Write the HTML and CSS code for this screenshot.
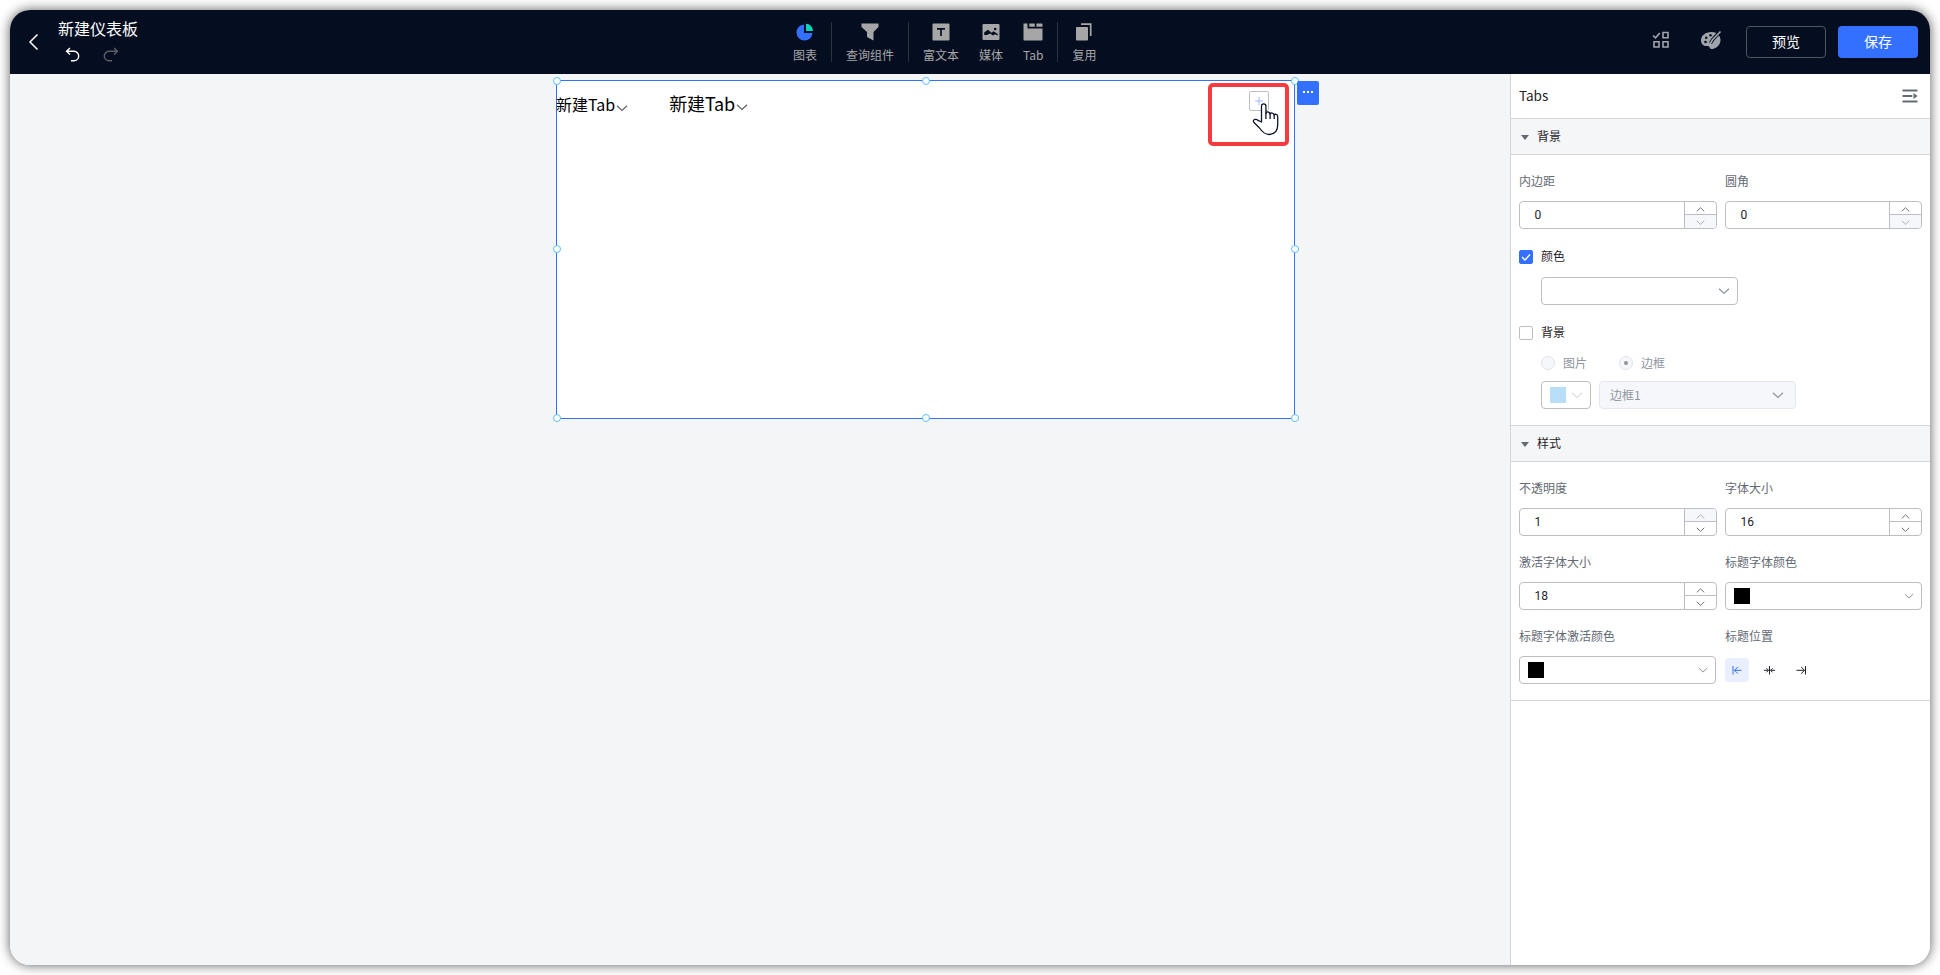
FILE: index.html
```html
<!DOCTYPE html>
<html lang="zh-CN">
<head>
<meta charset="utf-8">
<title>新建仪表板</title>
<link rel="stylesheet" href="styles.css">
</head>
<body>
<svg class="defs">
  <symbol id="chev-down" viewBox="0 0 12 12"><path d="M1 3.700 6 8.500 11 3.700" fill="none" stroke="currentColor" stroke-width="1.200"/></symbol>
  <symbol id="chev-up" viewBox="0 0 12 12"><path d="M1 8.500 6 3.700 11 8.500" fill="none" stroke="currentColor" stroke-width="1.200"/></symbol>
</svg>
<div class="window">
  <header class="header">
    <div class="left">
      <svg class="back" width="12" height="18" viewBox="0 0 12 18"><path d="M9.500 1.500 2 9l7.500 7.500" fill="none" stroke="#fff" stroke-width="1.500"/></svg>
      <div class="name">
        <div class="name-text">新建仪表板</div>
        <div class="history">
          <svg width="16" height="16" viewBox="0 0 16 16" fill="none" stroke="#fff" stroke-width="1.400"><path d="M5 1 1.500 4.300 5 7.600M1.500 4.300H9a4.700 4.700 0 0 1 0 9.400H6"/></svg>
          <svg width="16" height="16" viewBox="0 0 16 16" fill="none" stroke="#5b5d62" stroke-width="1.400"><path d="m11 1 3.500 3.300L11 7.600M14.500 4.300H6a4.700 4.700 0 0 0 0 9.400h3"/></svg>
        </div>
      </div>
    </div>
    <nav class="tools">
      <div class="group">
        <div class="tool"><svg width="18" height="18" viewBox="0 0 18 18"><path d="M8 1.500V10h8.500A8 8 0 1 1 8 1.500Z" fill="#3370ff"/><path d="M10 .8A7 7 0 0 1 17 8h-7Z" fill="#00d6b9"/></svg><span>图表</span></div>
      </div>
      <div class="group">
        <div class="tool"><svg width="18" height="18" viewBox="0 0 18 18"><path d="M.5.500h17V4l-5 5v8.500L6 14V9L.5 4Z" fill="#a6a6a6"/></svg><span>查询组件</span></div>
      </div>
      <div class="group">
        <div class="tool"><svg width="18" height="18" viewBox="0 0 18 18"><rect x=".5" y=".5" width="17" height="17" rx="1" fill="#a6a6a6"/><path d="M5 5.800h8M9 5.800V13" stroke="#050e21" stroke-width="1.700"/></svg><span>富文本</span></div>
        <div class="tool"><svg width="18" height="18" viewBox="0 0 18 18"><rect x=".5" y="1" width="17" height="16" rx="1" fill="#a6a6a6"/><path d="M2.200 12V9.500L6 6.800l3.500 3 2-1.500L15.800 11v1.500L13 11.200l-2 1.300-3-2-3 1.500Z" fill="#050e21"/><circle cx="13.200" cy="6" r="1.300" fill="#050e21"/></svg><span>媒体</span></div>
        <div class="tool"><svg class="wide" width="20" height="18" viewBox="0 0 20 18"><path d="M.5.500h4v5h15v11.300q0 .7-.7.700H1.200q-.7 0-.7-.7ZM6.300.5h5.500v3.300H6.300ZM13.400.5h5.300q.8 0 .8.8v2.500h-6.100Z" fill="#a6a6a6"/></svg><span>Tab</span></div>
      </div>
      <div class="group">
        <div class="tool"><svg width="18" height="18" viewBox="0 0 18 18"><rect x="1" y="4" width="12" height="13.500" rx=".8" fill="#a6a6a6"/><path d="M6 1.200h9.700V13" fill="none" stroke="#a6a6a6" stroke-width="1.700"/></svg><span>复用</span></div>
      </div>
    </nav>
    <div class="actions">
      <svg class="batch" width="18" height="18" viewBox="0 0 18 18" fill="none" stroke="#a0a4ab" stroke-width="1.600"><path d="m1 4.500 2.500 2.300L7.800 2"/><path d="M11 1.500h5v5.300h-5ZM2 10.700h5V16H2ZM11 10.700h5V16h-5Z"/></svg>
      <svg class="palette" width="22" height="20" viewBox="0 0 22 20"><path d="M11.500 2C5.500 2 1 5.500 1 10.500 1 14 3.500 16 6.500 16c2 0 2.700.3 3.200 1.700.5 1.200 2 1.600 3.800 1 4-1.200 7-4.700 7-8.700 0-4.500-4-8-9-8Z" fill="#a0a4ab"/><g fill="#050e21"><circle cx="5.500" cy="12" r="1.300"/><circle cx="6.200" cy="7.700" r="1.200"/><circle cx="10.500" cy="5.200" r="1.200"/></g><path d="m10.500 13.200 2-3.400L20.500 1" fill="none" stroke="#050e21" stroke-width="3.400"/><path d="m10.300 13.700 2-3.700 8.200-8.500" fill="none" stroke="#a0a4ab" stroke-width="1.700"/></svg>
      <button class="btn outline">预览</button>
      <button class="btn primary">保存</button>
    </div>
  </header>
  <main class="main">
    <section class="canvas">
      <div class="widget">
        <div class="tabs">
          <div class="tab">新建Tab<svg width="12" height="12"><use href="#chev-down"/></svg></div>
          <div class="tab active">新建Tab<svg width="12" height="12"><use href="#chev-down"/></svg></div>
        </div>
        <i class="dot nw"></i><i class="dot n"></i><i class="dot ne"></i><i class="dot w"></i><i class="dot e"></i><i class="dot sw"></i><i class="dot s"></i><i class="dot se"></i>
        <div class="more"><i></i><i></i><i></i></div>
        <div class="add"><svg width="10" height="10" viewBox="0 0 10 10"><path d="M5 1v8M1 5h8" stroke="#9db8fb"/></svg></div>
        <div class="mark"></div>
        <svg class="hand" width="28" height="34" viewBox="0 0 28 34"><path d="M9.500 20V4a2.200 2.200 0 0 1 4.400 0v7.500q0-1.800 2.200-1.500 2 .3 2 2.200 0-1.500 2.200-1.100 1.900.4 1.900 2.100.2-1.300 2-.8 1.500.5 1.500 2.300V23q0 9-8.700 9.500Q12 32.500 7.500 26L2 20.500q-1.500-2.300.5-3 2-.5 4 1.200Z" fill="#fff" stroke="#12162a" stroke-width="1.300" stroke-linejoin="round"/><path d="M13.900 10.500V17M18.100 11v6M22.200 12v5" stroke="#12162a" stroke-width="1.300"/></svg>
      </div>
    </section>
    <aside class="panel">
      <div class="panel-title"><span>Tabs</span>
        <svg width="16" height="14" viewBox="0 0 16 14" fill="#646a73"><path d="M.5.500h15v2H.5ZM.5 6h9.800v2H.5ZM.5 11.500h15v2H.5ZM11.500 4 15.500 7l-4 3Z"/></svg>
      </div>
      <div class="section-head"><i></i><span>背景</span></div>
      <div class="section first">
        <div class="grid">
          <div class="field"><label>内边距</label><div class="num"><b>0</b><div class="steps"><span><svg><use href="#chev-up"/></svg></span><span class="off"><svg><use href="#chev-down"/></svg></span></div></div></div>
          <div class="field"><label>圆角</label><div class="num"><b>0</b><div class="steps"><span><svg><use href="#chev-up"/></svg></span><span class="off"><svg><use href="#chev-down"/></svg></span></div></div></div>
        </div>
        <div class="check"><i class="box on"><svg width="12" height="12" viewBox="0 0 12 12"><path d="m2 6 3 3 5-5.500" fill="none" stroke="#fff" stroke-width="1.300"/></svg></i><span>颜色</span></div>
        <div class="select color-select"><svg class="big"><use href="#chev-down"/></svg></div>
        <div class="check second"><i class="box"></i><span>背景</span></div>
        <div class="radios"><span class="radio"><i></i>图片</span><span class="radio"><i class="sel"></i>边框</span></div>
        <div class="frame-row">
          <div class="select mini"><i class="swatch blue"></i><svg class="big"><use href="#chev-down"/></svg></div>
          <div class="select disabled">边框1<svg class="big"><use href="#chev-down"/></svg></div>
        </div>
      </div>
      <div class="section-head"><i></i><span>样式</span></div>
      <div class="section style">
        <div class="grid">
          <div class="field"><label>不透明度</label><div class="num"><b>1</b><div class="steps"><span class="off"><svg><use href="#chev-up"/></svg></span><span><svg><use href="#chev-down"/></svg></span></div></div></div>
          <div class="field"><label>字体大小</label><div class="num"><b>16</b><div class="steps"><span><svg><use href="#chev-up"/></svg></span><span><svg><use href="#chev-down"/></svg></span></div></div></div>
          <div class="field"><label>激活字体大小</label><div class="num"><b>18</b><div class="steps"><span><svg><use href="#chev-up"/></svg></span><span><svg><use href="#chev-down"/></svg></span></div></div></div>
          <div class="field"><label>标题字体颜色</label><div class="select"><i class="swatch"></i><svg><use href="#chev-down"/></svg></div></div>
          <div class="field"><label>标题字体激活颜色</label><div class="select"><i class="swatch"></i><svg><use href="#chev-down"/></svg></div></div>
          <div class="field"><label>标题位置</label><div class="aligns">
            <span class="sel"><svg viewBox="0 0 12 12"><path d="M2 2v8.500M3 6.300h7.500M6.800 3 3.500 6.300l3.300 3.300"/></svg></span>
            <span><svg viewBox="0 0 12 12"><path d="M6.500 2v8.500M1 6.300h4.500M7.500 6.300H12M3.500 4.300l2 2-2 2M9.500 4.300l-2 2 2 2"/></svg></span>
            <span><svg viewBox="0 0 12 12"><path d="M10.500 2v8.500M1.500 6.300h8M6.200 3l3.300 3.300-3.300 3.300"/></svg></span>
          </div></div>
        </div>
      </div>
    </aside>
  </main>
</div>
</body>
</html>
```

FILE: styles.css
```css
* { box-sizing: border-box; }
body {
  margin: 0;
  height: 975px;
  padding: 10px;
  overflow: hidden;
  background: #fff;
  font: 12px/20px "Noto Sans CJK SC", sans-serif;
  color: #1f2329;
}
svg { display: block; flex: none; }
i { font-style: normal; }
.defs { position: absolute; width: 0; height: 0; }
.window {
  width: 1920px;
  height: 955px;
  border-radius: 20px;
  overflow: hidden;
  box-shadow: 0 0 12px rgba(0, 0, 0, .65);
  display: flex;
  flex-direction: column;
}
.header {
  height: 64px;
  background: #050e21;
  display: grid;
  grid-template-columns: 769px 1fr auto;
}
.left { display: flex; padding-left: 18px; }
.back { margin: 23px 0 0; }
.name { padding: 6px 0 0 18px; }
.name-text { font-size: 16px; line-height: 24px; color: #fff; }
.history { display: flex; gap: 22px; padding: 7px 0 0 7px; }
.tools { display: flex; height: 64px; }
.group { position: relative; display: flex; gap: 20px; padding: 13px 14px 0; height: 64px; }
.group + .group { padding-left: 15px; }
.group + .group::before {
  content: "";
  position: absolute;
  left: 0;
  top: 12px;
  width: 1px;
  height: 40px;
  background: #2b3240;
}
.tool { display: flex; flex-direction: column; align-items: center; gap: 4px; color: #a6a6a6; white-space: nowrap; }
.tool .wide { margin: 0 -1px; }
.actions { display: flex; padding: 16px 12px 0 0; }
.batch { margin: 5px 30px 0 0; }
.palette { margin: 4px 24px 0 0; }
.btn {
  width: 80px;
  height: 32px;
  padding: 0 0 2px;
  border-radius: 4px;
  font: 14px/20px "Noto Sans CJK SC", sans-serif;
  color: #fff;
}
.outline { border: 1px solid #50565f; background: transparent; }
.primary { border: 0; background: #3370ff; margin-left: 12px; }
.main { flex: 1; display: flex; }
.canvas { flex: 1; background: #f4f5f7; padding: 6px 0 0 546px; }
.widget { position: relative; width: 739px; height: 339px; border: 1px solid #3370ff; background: #fff; }
.tabs { display: flex; gap: 41px; align-items: center; height: 40px; padding-top: 6px; color: #000; margin-left: -1px; }
.tab { display: flex; align-items: center; font-size: 16px; line-height: 24px; }
.tab svg { margin: 7px 0 0 1px; color: #606266; }
.tab.active { font-size: 18px; margin-top: -2px; letter-spacing: -.15px; }
.dot { position: absolute; width: 8px; height: 8px; border: 1px solid #59c3ee; border-radius: 50%; background: #fff; }
.nw, .n, .ne { top: -4px; }
.w, .e { top: 164px; }
.sw, .s, .se { top: 333px; }
.nw, .w, .sw { left: -4px; }
.n, .s { left: 365px; }
.ne, .e, .se { left: 734px; }
.more {
  position: absolute;
  left: 740px;
  top: 0;
  width: 22px;
  height: 24px;
  border-radius: 2px;
  background: #3370ff;
  display: flex;
  gap: 2px;
  padding: 10px 0 0 6px;
}
.more i { width: 2px; height: 2px; background: #fff; }
.add {
  position: absolute;
  left: 692px;
  top: 10px;
  width: 20px;
  height: 20px;
  border: 1px solid #bbbfc4;
  border-radius: 2px;
  padding: 4px;
}
.mark { position: absolute; left: 651px; top: 2px; width: 81px; height: 63px; border: 4px solid #f53b3d; border-radius: 5px; }
.hand { position: absolute; left: 695px; top: 21px; }
.panel { width: 420px; border-left: 1px solid #d4d5d8; background: #fff; }
.panel-title {
  height: 45px;
  padding: 0 12px 0 8px;
  border-bottom: 1px solid #d4d5d8;
  display: flex;
  align-items: center;
  justify-content: space-between;
  font-size: 13.500px;
}
.panel-title span, .section-head span, .check span { padding-bottom: 2px; }
.section-head {
  height: 36px;
  padding-left: 10px;
  border-bottom: 1px solid #d4d5d8;
  background: #f5f6f7;
  display: flex;
  align-items: center;
  gap: 8px;
}
.section-head i { border: 4px solid transparent; border-top: 5px solid #646a73; border-bottom: 0; margin-top: 2px; }
.section { padding: 16px 7px 0 8px; border-bottom: 1px solid #d4d5d8; }
.first { height: 271px; }
.style { height: 239px; }
.grid { display: grid; grid-template-columns: 198px 197px; gap: 16px 8px; }
.field label { display: block; height: 30px; color: #646a73; }
.style .grid .field { height: 58px; }
.num, .select { height: 28px; border: 1px solid #bbbfc4; border-radius: 4px; display: flex; overflow: hidden; }
.num b { flex: 1; padding-left: 14.500px; line-height: 26px; font-weight: 400; font-family: Roboto, sans-serif; }
.steps { width: 32px; border-left: 1px solid #bbbfc4; }
.steps span { display: flex; justify-content: center; align-items: center; height: 13px; padding-top: 1px; color: #606266; }
.steps span:first-child { border-bottom: 1px solid #bbbfc4; padding-top: 2px; }
.steps .off { background: #f5f7fa; color: #a8abb2; }
.steps svg { width: 9px; height: 9px; }
.select { width: 197px; align-items: center; padding: 0 7px 0 8px; color: #8f959e; }
.select svg { width: 10px; height: 10px; margin-left: auto; }
.select .big { width: 12px; height: 12px; }
.swatch { width: 16px; height: 16px; background: #000; }
.check { display: flex; align-items: center; gap: 8px; height: 20px; margin-top: 18px; }
.box { width: 14px; height: 14px; border: 1px solid #bbbfc4; border-radius: 2px; }
.box.on { background: #3370ff; border-color: #3370ff; }
.color-select { margin: 10px 0 0 22px; }
.check.second { margin-top: 18px; }
.radios { display: flex; gap: 32px; padding-left: 22px; margin-top: 10px; color: #8f959e; }
.radio { display: flex; align-items: center; gap: 8px; }
.radio i { width: 14px; height: 14px; border: 1px solid #e0e3ea; border-radius: 50%; background: #f5f7fa; padding: 4px; }
.radio .sel::before { content: ""; display: block; width: 4px; height: 4px; border-radius: 50%; background: #8f959e; }
.frame-row { display: flex; gap: 8px; padding-left: 22px; margin-top: 8px; }
.mini { width: 50px; color: #dcdfe6; }
.blue { background: #b9dff8; }
.disabled { padding: 0 11px 0 10px; background: #f5f7fa; border-color: #e4e7ed; }
.disabled svg { color: #8f959e; }
.aligns { display: flex; gap: 8px; padding-top: 2px; }
.aligns span { width: 24px; height: 24px; border-radius: 4px; display: flex; align-items: center; justify-content: center; color: #1f2329; }
.aligns .sel { background: #e9efff; color: #3370ff; }
.aligns svg { width: 12px; height: 12px; fill: none; stroke: currentColor; stroke-width: 1; }
```
